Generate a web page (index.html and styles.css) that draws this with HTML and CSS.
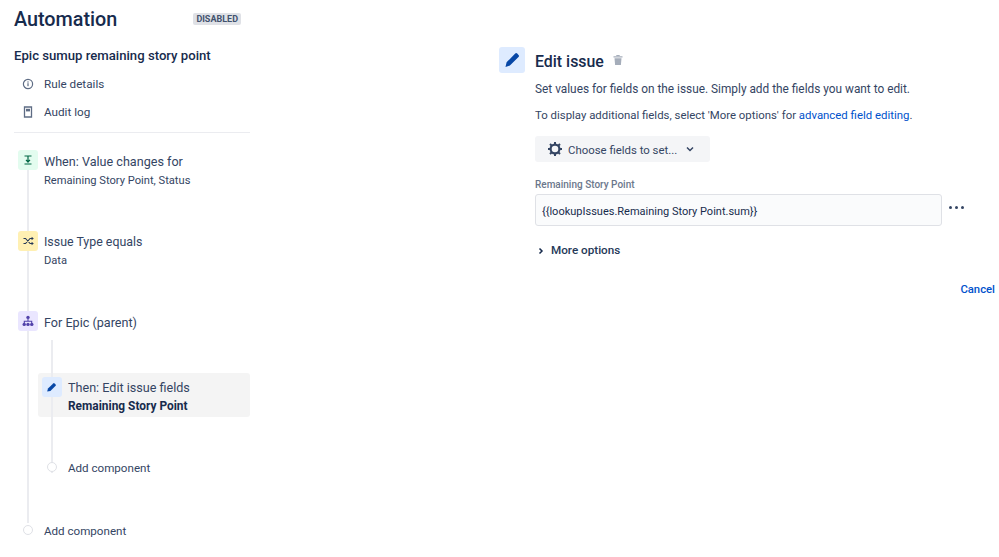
FILE: index.html
```html
<!DOCTYPE html>
<html lang="en">
<head>
<meta charset="utf-8">
<title>Automation</title>
<link rel="stylesheet" href="styles.css">
</head>
<body>
<div class="page">
  <aside class="sidebar">
    <header class="top">
      <h1 class="app-title">Automation</h1>
      <span class="badge">DISABLED</span>
    </header>
    <h2 class="rule-name">Epic sumup remaining story point</h2>
    <nav class="nav">
      <div class="nav-item">
        <svg class="nav-icon" viewBox="0 0 12 12"><circle cx="6" cy="6" r="4.6" fill="none" stroke="#5e6c84" stroke-width="1.2"/><rect x="5.4" y="5.2" width="1.2" height="3" fill="#5e6c84"/><rect x="5.4" y="3.4" width="1.2" height="1.2" fill="#5e6c84"/></svg>
        <span>Rule details</span>
      </div>
      <div class="nav-item">
        <svg class="nav-icon" viewBox="0 0 12 12"><path d="M2.5 1h7v10h-7z" fill="none" stroke="#5e6c84" stroke-width="1.3"/><rect x="4" y="2.8" width="4" height="2.6" fill="#5e6c84"/></svg>
        <span>Audit log</span>
      </div>
    </nav>
    <hr class="divider">
    <div class="flow">
      <span class="rail rail-outer"></span>
      <div class="step step-when">
        <span class="tile tile-green"><svg viewBox="0 0 20 20"><path d="M6.5 6h7M6.5 14h7M10 6v6M8 9.8 10 12l2-2.2" fill="none" stroke="#006644" stroke-width="1.2"/></svg></span>
        <div class="step-text"><div class="step-title">When: Value changes for</div><div class="step-sub">Remaining Story Point, Status</div></div>
      </div>
      <div class="step step-cond">
        <span class="tile tile-yellow"><svg viewBox="0 0 20 20"><path d="M5.5 7.5h2l4.6 5h2.4M5.5 12.5h2l4.6-5h2.4" fill="none" stroke="#253858" stroke-width="1.1"/><path d="M13.6 5.7v3.6l2.2-1.8zM13.6 10.7v3.6l2.2-1.8z" fill="#253858"/></svg></span>
        <div class="step-text"><div class="step-title">Issue Type equals</div><div class="step-sub">Data</div></div>
      </div>
      <div class="step step-branch">
        <span class="tile tile-purple"><svg viewBox="0 0 20 20"><path d="M10 7.5v2.6M6.3 12.5v-2.2h7.4v2.2" fill="none" stroke="#5243aa" stroke-width="1.1"/><circle cx="10" cy="6.4" r="1.7" fill="#5243aa"/><circle cx="6.2" cy="13.4" r="1.7" fill="#5243aa"/><circle cx="13.8" cy="13.4" r="1.7" fill="#5243aa"/><circle cx="10" cy="13.4" r="1.7" fill="#5243aa"/></svg></span>
        <div class="step-text"><div class="step-title">For Epic (parent)</div></div>
      </div>
      <div class="branch">
        <span class="rail rail-inner"></span>
        <div class="card">
          <span class="tile tile-blue"><svg viewBox="0 0 20 20"><path d="M5.2 14.6l.8-3 5.2-5.2a1 1 0 0 1 1.4 0l1 1a1 1 0 0 1 0 1.4l-5.2 5.2z" fill="#0747a6"/></svg></span>
          <div class="step-text"><div class="step-title">Then: Edit issue fields</div><div class="step-strong">Remaining Story Point</div></div>
        </div>
        <div class="add add-inner"><span class="dot"></span><span>Add component</span></div>
      </div>
      <div class="add add-outer"><span class="dot"></span><span>Add component</span></div>
    </div>
  </aside>
  <main class="main">
    <div class="head">
      <span class="head-tile"><svg viewBox="0 0 26 26"><path d="M6.5 20l1.1-4.7 8.6-8.7a1.4 1.4 0 0 1 2 0l1.3 1.3a1.4 1.4 0 0 1 0 2l-8.6 8.7z" fill="#0747a6"/></svg></span>
      <h2 class="head-title">Edit issue</h2>
      <svg class="trash" viewBox="0 0 12 12"><path d="M1.5 2.2h9v1.2h-9zM4.3 1h3.4v1H4.3zM2.5 4.2h7l-.6 6.8H3.1z" fill="#a5adba"/></svg>
    </div>
    <div class="body">
      <p class="line line-first">Set values for fields on the issue. Simply add the fields you want to edit.</p>
      <p class="line line-second">To display additional fields, select 'More options' for <a class="link" href="#">advanced field editing</a>.</p>
      <button class="choose" type="button">
        <svg class="gear" viewBox="0 0 16 16"><circle cx="8" cy="8" r="4.4" fill="none" stroke="#344563" stroke-width="2.2"/><path d="M8 1v2.6M8 12.4V15M1 8h2.6M12.4 8H15M3 3l1.9 1.9M11.1 11.1 13 13M13 3l-1.9 1.9M4.9 11.1 3 13" stroke="#344563" stroke-width="2"/></svg>
        <span class="choose-text">Choose fields to set...</span>
        <svg class="caret" viewBox="0 0 10 10"><path d="M2 3.5 5 6.5 8 3.5" fill="none" stroke="#344563" stroke-width="1.5"/></svg>
      </button>
      <label class="field-label" for="rsp">Remaining Story Point</label>
      <div class="field-row">
        <input id="rsp" class="field" type="text" value="{{lookupIssues.Remaining Story Point.sum}}">
        <span class="dots"><i></i><i></i><i></i></span>
      </div>
      <div class="more">
        <svg class="more-caret" viewBox="0 0 8 8"><path d="M2.5 1.5 5 4 2.5 6.5" fill="none" stroke="#172b4d" stroke-width="1.5"/></svg>
        <span>More options</span>
      </div>
      <div class="actions"><a class="cancel" href="#">Cancel</a></div>
    </div>
  </main>
</div>
</body>
</html>
```
FILE: styles.css
```css
* { box-sizing: border-box; }
html, body { margin: 0; padding: 0; }
body {
  width: 999px;
  height: 557px;
  overflow: hidden;
  background: #fff;
  color: #172b4d;
  font-family: Roboto, "Noto Sans", sans-serif;
  font-size: 11.7px;
}
.page { display: flex; align-items: flex-start; }
.sidebar { width: 236px; margin-left: 14px; flex: none; }
.top { display: flex; align-items: center; justify-content: space-between; height: 38px; padding-right: 9px; }
.app-title { margin: 0; padding-top: 2px; font-size: 19.8px; font-weight: 500; line-height: 38px; color: #172b4d; }
.badge {
  background: #dfe1e6; color: #42526e; font-size: 9px; font-weight: 700;
  line-height: 12px; height: 12px; padding: 0 3px; border-radius: 2px;
}
.rule-name { margin: 9px 0 0; font-size: 13.15px; font-weight: 500; line-height: 18px; color: #172b4d; }
.nav { margin-top: 5px; }
.nav-item { display: flex; align-items: center; height: 28px; color: #344563; }
.nav-icon { width: 12px; height: 12px; margin: 0 10px 0 8px; flex: none; }
.divider { border: 0; border-top: 1px solid #ebecf0; margin: 6px 0 0; }
.flow { position: relative; padding-top: 17px; }
.rail { position: absolute; width: 2px; background: #ebecf0; }
.rail-outer { left: 13px; top: 30px; height: 360px; }
.rail-inner { left: 37px; top: -33px; height: 133px; }
.step { position: relative; display: flex; align-items: flex-start; }
.step-cond { margin-top: 42px; }
.step-branch { margin-top: 42px; }
.tile {
  width: 20px; height: 20px; border-radius: 3px; flex: none; margin-left: 4px;
  display: flex; position: relative;
}
.tile svg { width: 20px; height: 20px; }
.tile-green { background: #e3fcef; }
.tile-yellow { background: #fff0b3; }
.tile-purple { background: #eae6ff; }
.tile-blue { background: #deebff; }
.step-text { margin-left: 6px; padding-top: 2px; position: relative; }
.step-cond .step-text, .card .step-text { padding-top: 1px; }
.step-title { font-size: 12.6px; line-height: 20px; color: #344563; }
.step-cond .step-title { font-size: 12.4px; }
.step-sub { font-size: 11.15px; line-height: 17px; color: #344563; }
.step-strong { font-size: 11.9px; line-height: 17px; font-weight: 700; color: #172b4d; }
.branch { position: relative; margin-top: 40px; }
.card {
  display: flex; align-items: flex-start; height: 44px; margin-left: 24px;
  width: 212px; padding: 4px; background: #f4f4f4; border-radius: 3px;
}
.card .tile { margin-left: 0; }
.add { display: flex; align-items: flex-start; color: #344563; line-height: 18px; font-size: 11.6px; position: relative; }
.dot { width: 10px; height: 10px; margin-top: 3px; border-radius: 50%; background: #fff; border: 1px solid #dfe1e6; flex: none; }
.add-inner { margin-top: 42px; padding-left: 33px; }
.add-inner .dot { margin-right: 11px; }
.add-outer { margin-top: 45px; padding-left: 9px; }
.add-outer .dot { margin-right: 11px; }
.main { width: 496px; margin-left: 249px; padding-top: 47px; flex: none; }
.head { display: flex; align-items: center; height: 26px; }
.head-tile { width: 26px; height: 26px; background: #deebff; border-radius: 3px; flex: none; display: flex; }
.head-tile svg { width: 26px; height: 26px; }
.head-title { margin: 0 0 0 10px; font-size: 15.9px; font-weight: 500; line-height: 30px; align-self: flex-start; color: #172b4d; }
.trash { width: 12px; height: 12px; margin: 0 0 0 8px; }
.body { padding-left: 36px; }
.line { margin: 0; line-height: 16px; color: #344563; white-space: nowrap; }
.line-first { margin-top: 8px; font-size: 11.85px; }
.line-second { margin-top: 10px; font-size: 11.4px; }
.link { color: #0052cc; text-decoration: none; }
.choose {
  display: flex; align-items: center; width: 175px; height: 26px; margin-top: 13px; padding: 0 0 0 12px;
  border: 0; border-radius: 3px; background: #f4f5f7; color: #344563; font: inherit; font-size: 11.4px;
}
.choose-text { padding-top: 1px; }
.gear { width: 16px; height: 16px; margin-right: 5px; flex: none; }
.caret { width: 10px; height: 10px; margin-left: 8px; flex: none; }
.field-label { display: block; margin-top: 16px; font-size: 10px; font-weight: 500; line-height: 14px; color: #6b778c; }
.field-row { display: flex; align-items: center; margin-top: 2px; }
.field {
  width: 407px; height: 32px; padding: 2px 6px 0; border: 1.5px solid #dfe1e6; border-radius: 3px;
  background: #fafbfc; color: #172b4d; font: inherit; font-size: 11px; outline: none;
}
.dots { display: flex; gap: 3px; margin: 0 0 6px 7px; }
.dots i { width: 3px; height: 3px; border-radius: 50%; background: #344563; }
.more { display: flex; align-items: center; margin-top: 16px; font-weight: 500; line-height: 16px; color: #253858; }
.more-caret { width: 8px; height: 8px; margin: 2px 6px 0 2px; flex: none; }
.actions { display: flex; justify-content: flex-end; margin-top: 24px; }
.cancel { color: #0052cc; font-weight: 500; font-size: 11.3px; line-height: 16px; text-decoration: none; }
```
